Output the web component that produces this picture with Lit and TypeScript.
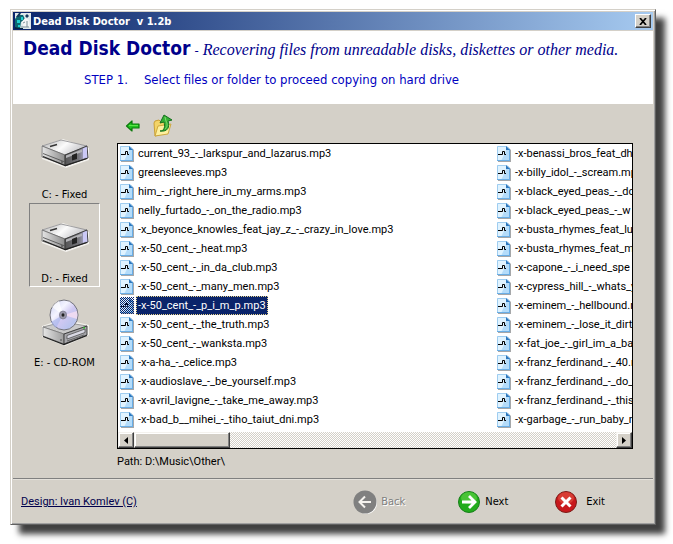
import { LitElement, html, css, svg } from "lit";
import { customElement, state } from "lit/decorators.js";
import { classMap } from "lit/directives/class-map.js";

const FIRST_COLUMN = [
  "current_93_-_larkspur_and_lazarus.mp3",
  "greensleeves.mp3",
  "him_-_right_here_in_my_arms.mp3",
  "nelly_furtado_-_on_the_radio.mp3",
  "-x_beyonce_knowles_feat_jay_z_-_crazy_in_love.mp3",
  "-x-50_cent_-_heat.mp3",
  "-x-50_cent_-_in_da_club.mp3",
  "-x-50_cent_-_many_men.mp3",
  "-x-50_cent_-_p_i_m_p.mp3",
  "-x-50_cent_-_the_truth.mp3",
  "-x-50_cent_-_wanksta.mp3",
  "-x-a-ha_-_celice.mp3",
  "-x-audioslave_-_be_yourself.mp3",
  "-x-avril_lavigne_-_take_me_away.mp3",
  "-x-bad_b__mihei_-_tiho_taiut_dni.mp3",
];

const SECOND_COLUMN = [
  "-x-benassi_bros_feat_dha",
  "-x-billy_idol_-_scream.mp3",
  "-x-black_eyed_peas_-_do",
  "-x-black_eyed_peas_-_w",
  "-x-busta_rhymes_feat_lun",
  "-x-busta_rhymes_feat_ma",
  "-x-capone_-_i_need_spe",
  "-x-cypress_hill_-_whats_y",
  "-x-eminem_-_hellbound.m",
  "-x-eminem_-_lose_it_dirty",
  "-x-fat_joe_-_girl_im_a_ba",
  "-x-franz_ferdinand_-_40.m",
  "-x-franz_ferdinand_-_do_",
  "-x-franz_ferdinand_-_this_",
  "-x-garbage_-_run_baby_r",
];

const DRIVES = [
  { id: "C", label: "C: - Fixed", kind: "disk" },
  { id: "D", label: "D: - Fixed", kind: "disk" },
  { id: "E", label: "E: - CD-ROM", kind: "cd" },
];

const diskIcon = html`<svg class="drive-icon" viewBox="0 0 48 48" aria-hidden="true">
  <defs>
    <linearGradient id="top" x1="0" y1="0" x2="1" y2="0.4">
      <stop offset="0" stop-color="#b4b4b4" /><stop offset="0.55" stop-color="#fbfbfb" /><stop offset="1" stop-color="#c4c4c8" />
    </linearGradient>
    <linearGradient id="side" x1="0" y1="0" x2="1" y2="0">
      <stop offset="0" stop-color="#e4e4e4" /><stop offset="1" stop-color="#8c8c8c" />
    </linearGradient>
    <linearGradient id="end" x1="0" y1="0" x2="1" y2="0">
      <stop offset="0" stop-color="#555" /><stop offset="0.6" stop-color="#77777d" /><stop offset="1" stop-color="#c6c4f4" />
    </linearGradient>
  </defs>
  <path d="M0 15 L1 28 L25 37 L48 29 L48 17 L22 8 Z" fill="#f4f2ee" />
  <path d="M1 15 L20 9 L46 15 L24 24 Z" fill="url(#top)" stroke="#8a8a8e" stroke-width="0.8" />
  <path d="M1 15 L24 24 L24 34 L1 26 Z" fill="url(#side)" stroke="#666" stroke-width="0.8" />
  <path d="M24 24 L46 15 L47 27 L24 35 Z" fill="url(#end)" stroke="#333" stroke-width="0.9" />
  <path d="M42 17.500 L46 16 L46 26 L42 27.500 Z" fill="#cbc9f6" />
  <path d="M25 24.500 L41 18.500 L41 21 L25 27 Z" fill="#b4b4b8" />
  <path d="M31 24 L36 22 L36 28 L31 29.500 Z" fill="#222" />
  <path d="M2 22.500 L24 31" stroke="#555" stroke-width="0.9" fill="none" />
  <path d="M2 25.500 L24 34.500 L46 27.500" stroke="#222" stroke-width="1.200" fill="none" />
  <path d="M9 15.500 L16 13.500" stroke="#333" stroke-width="1.400" />
  <circle cx="21" cy="31" r="1" fill="#5a5a5a" />
</svg>`;

const cdIcon = html`<svg class="drive-icon" viewBox="0 2 48 48" aria-hidden="true">
  <defs>
    <linearGradient id="cdside" x1="0" y1="0" x2="1" y2="0">
      <stop offset="0" stop-color="#e6e6e6" /><stop offset="1" stop-color="#9c9c9c" />
    </linearGradient>
    <linearGradient id="disc" x1="0" y1="0" x2="1" y2="1">
      <stop offset="0" stop-color="#c9cdf2" /><stop offset="0.35" stop-color="#f4f4ff" />
      <stop offset="0.55" stop-color="#cfc8f2" /><stop offset="0.8" stop-color="#b9c4ee" /><stop offset="1" stop-color="#eef" />
    </linearGradient>
  </defs>
  <path d="M1 29 L22 22 L48 28 L48 38 L24 49 L1 40 Z" fill="#f4f2ee" />
  <path d="M2 30 L22 25 L46 29 L23 37 Z" fill="#cacaca" stroke="#888" stroke-width="0.8" />
  <path d="M2 30 L23 37 L23 47 L2 39 Z" fill="url(#cdside)" stroke="#777" stroke-width="0.8" />
  <path d="M23 37 L46 29 L46 38 L23 47 Z" fill="#a6a6aa" stroke="#333" stroke-width="0.9" />
  <path d="M26 38.500 L44 32 L44 35.500 L26 42 Z" fill="#d9d9e4" stroke="#444" stroke-width="0.700" />
  <path d="M26 44 L43 38" stroke="#555" stroke-width="0.800" />
  <rect x="42" y="30" width="2" height="1.500" fill="#2cae2c" />
  <path d="M2 39.500 L23 47.500 L46 38.500" stroke="#222" stroke-width="1.200" fill="none" />
  <circle cx="20" cy="43" r="0.800" fill="#444" />
  <ellipse cx="23" cy="18" rx="14" ry="15" fill="url(#disc)" stroke="#73737b" stroke-width="1" />
  <path d="M22 18 L11 10 A14 15 0 0 1 18 4 Z" fill="#fff" opacity="0.700" />
  <path d="M23 18 L36 14 A14 15 0 0 1 36 22 Z" fill="#f7dff2" opacity="0.800" />
  <path d="M22 18 L15 31 A14 15 0 0 1 10 25 Z" fill="#a9b6ec" opacity="0.700" />
  <ellipse cx="22" cy="18" rx="3.600" ry="4" fill="#9b98ab" stroke="#77778a" stroke-width="0.700" />
  <ellipse cx="22" cy="18" rx="1.500" ry="1.700" fill="#222" />
</svg>`;

const fileIcon = html`<svg class="file-icon" viewBox="0 0 16 17" aria-hidden="true">
  <path d="M2 2 H12 L15 5 V17 H2 Z" fill="#8f9193" opacity="0.800" />
  <path d="M1 1 H11 L14 4 V16 H1 Z" fill="#b4dcfa" />
  <path d="M1 1 H10 V6 L5 16 H1 Z" fill="#e0f3ff" />
  <path d="M1 16 V15 H13 V4 H14 V16 Z" fill="#6aaee6" />
  <path d="M1.500 15 V1.500 H10" stroke="#9fcdf0" stroke-width="1" fill="none" />
  <path d="M10 1 L14 5 H10 Z" fill="#2f78bd" />
  <path d="M2 9.500 H6.500 V6.500 H8.500 V9.500 H10" stroke="#000" stroke-width="1" fill="none" />
</svg>`;

const round = (fill: string, light: string, rim: string, glyph: unknown) => svg`
  <circle cx="12" cy="12" r="10.5" fill=${fill} stroke=${rim} stroke-width="1" />
  <ellipse cx="12" cy="8" rx="8" ry="6" fill=${light} opacity="0.5" />
  ${glyph}`;

@customElement("app-root")
export class AppRoot extends LitElement {
  @state() private drive = "D";
  @state() private selected = "-x-50_cent_-_p_i_m_p.mp3";

  static styles = css`
    :host {
      display: block;
      box-sizing: border-box;
      padding: 9px 17px 20px 10px;
      background: #fff;
      color: #000;
      font: 11px/13px "DejaVu Sans Condensed", "DejaVu Sans", sans-serif;
    }
    * { box-sizing: border-box; }
    button { font: inherit; color: inherit; background: none; border: 0; padding: 0; margin: 0; }
    svg { display: block; flex: none; }
    .window {
      border: 1px solid;
      border-color: #d4d0c8 #606060 #606060 #d4d0c8;
      background: #d4d0c8;
      box-shadow: inset 1px 1px 0 #fff, inset -1px -1px 0 #a0a0a0, 9px 9px 6px #404040;
      padding: 2px;
    }
    .titlebar {
      display: flex;
      align-items: center;
      gap: 2px;
      height: 18px;
      margin-bottom: 1px;
      padding: 0 2px;
      background: linear-gradient(to right, #0a246a, #a6caf0);
      color: #fff;
      font-weight: bold;
      white-space: pre;
    }
    .app-icon { width: 16px; height: 16px; }
    .name { flex: 1; }
    .close {
      display: grid;
      place-items: center;
      width: 16px;
      height: 14px;
      background: #d4d0c8;
      border: 1px solid;
      border-color: #fff #404040 #404040 #fff;
      box-shadow: inset -1px -1px 0 #808080;
    }
    .close svg { width: 8px; height: 7px; }
    .header { background: #fff; color: #00008b; height: 73px; padding: 5px 10px; }
    .headline { display: flex; align-items: baseline; gap: 4px; margin: 0; font-weight: normal; line-height: 24px; white-space: nowrap; }
    .product { font: bold 19px/24px "DejaVu Sans Condensed", sans-serif; }
    .dash { font-size: 13px; }
    .tagline { font: italic 16px/24px "Liberation Serif", serif; }
    .step { display: flex; gap: 16px; margin: 8px 0 0 61px; font-size: 13px; line-height: 18px; color: #0000c0; white-space: nowrap; }
    .body { display: flex; padding: 9px 20px 9px 16px; }
    .drives { display: flex; flex-direction: column; width: 71px; margin: 6px 17px 0 0; flex: none; }
    .drive {
      display: flex;
      flex-direction: column;
      align-items: center;
      gap: 9px;
      height: 84px;
      padding: 11px 0 0;
      border: 1px solid transparent;
      white-space: nowrap;
    }
    .drive.current { border-color: #808080 #fff #fff #808080; }
    .drive-icon { width: 48px; height: 48px; }
    .files { flex: 1; min-width: 0; }
    .tools { display: flex; align-items: center; gap: 12px; height: 30px; padding: 0 0 4px 8px; }
    .tool-back { width: 16px; height: 16px; }
    .tool-up { width: 22px; height: 24px; }
    .listbox { border: 1px solid #000; background: #fff; }
    .columns { display: flex; height: 288px; overflow: hidden; }
    .column { list-style: none; margin: 0; padding: 0 0 0 1px; width: 377px; flex: none; }
    .file { display: flex; align-items: center; gap: 1px; height: 19px; font: 11px/17px Roboto, Arial, sans-serif; white-space: nowrap; }
    .file-icon { width: 16px; height: 17px; }
    .filename { border: 1px solid transparent; padding: 0 1px; height: 19px; }
    .selected .filename { background: #0a246a; color: #fff; border: 1px dotted #e8d48a; }
    .icon-wrap { position: relative; }
    .selected .icon-wrap::after {
      content: "";
      position: absolute;
      inset: 0 1px 0 1px;
      background: repeating-conic-gradient(#0a246a 0 25%, transparent 0 50%) 0 0 / 2px 2px;
    }
    .scrollbar { display: flex; height: 16px; background: repeating-conic-gradient(#d4d0c8 0 25%, #fff 0 50%) 0 0 / 2px 2px; }
    .arrow, .thumb {
      height: 16px;
      background: #d4d0c8;
      border: 1px solid;
      border-color: #f4f2ee #404040 #404040 #f4f2ee;
      box-shadow: inset -1px -1px 0 #808080, inset 1px 1px 0 #fff;
    }
    .arrow { display: grid; place-items: center; width: 16px; }
    .arrow svg { width: 4px; height: 7px; }
    .thumb { width: 96px; margin-right: auto; }
    .path { margin: 6px 0 0; font: 11px/14px Roboto, Arial, sans-serif; }
    .footer {
      display: flex;
      align-items: center;
      border-top: 1px solid #808080;
      box-shadow: inset 0 1px 0 #e4e1db;
      height: 44px;
      padding: 3px 48px 0 8px;
      line-height: 14px;
    }
    .credit { color: #00004c; font: 11px/14px Roboto, Arial, sans-serif; margin-right: auto; }
    .nav { display: flex; gap: 46px; }
    .nav button { display: flex; align-items: center; gap: 4px; }
    .nav svg { width: 24px; height: 24px; }
    .nav .back { color: #808080; text-shadow: 1px 1px 0 #fff; margin-right: 6px; }
    .nav .exit { gap: 8px; }
  `;

  private renderColumn(names: string[]) {
    return html`<ul class="column" role="listbox" aria-label="Files">
      ${names.map(
        (name) => html`<li
          class=${classMap({ file: true, selected: name === this.selected })}
          role="option"
          aria-selected=${name === this.selected ? "true" : "false"}
          @click=${() => (this.selected = name)}
        ><span class="icon-wrap">${fileIcon}</span><span class="filename">${name}</span></li>`
      )}
    </ul>`;
  }

  render() {
    return html`<main class="window">
      <div class="titlebar">
        <svg class="app-icon" viewBox="0 0 16 16" aria-hidden="true">
          <rect width="16" height="16" fill="#dfe8ea" />
          <path d="M0 16 V6 L3 2 H8 L10 6 L6 9 L5 16 Z" fill="#0e6870" />
          <path d="M1 4 L4 0 H6 L4 4 Z M10 3 L12 1 L14 3 L12 5 Z" fill="#14395c" />
          <path d="M2 7 H5 V10 H2 Z M6 4 H8 V7 H6 Z M3 12 H5 V14 H3 Z" fill="#1fd0cf" />
          <path d="M7 9 L10 5 L14 7 L15 14 L9 15 Z" fill="#f6f6f6" />
          <path d="M8 10 L10 9 M12 8 V14 M6 14 H14" stroke="#7c9098" fill="none" />
          <path d="M0 14 L4 15 H8 V16 H0 Z" fill="#07263f" />
        </svg>
        <span class="name">Dead Disk Doctor  v 1.2b</span>
        <button class="close" aria-label="Close">
          <svg viewBox="0 0 8 7" aria-hidden="true"><path d="M1 0 L7 7 M7 0 L1 7" stroke="#000" stroke-width="1.700" /></svg>
        </button>
      </div>
      <header class="header">
        <h1 class="headline">
          <span class="product">Dead Disk Doctor</span><span class="dash">-</span>
          <span class="tagline">Recovering files from unreadable disks, diskettes or other media.</span>
        </h1>
        <p class="step"><span>STEP 1.</span><span>Select files or folder to proceed copying on hard drive</span></p>
      </header>
      <div class="body">
        <nav class="drives" aria-label="Drives">
          ${DRIVES.map(
            (d) => html`<button class=${classMap({ drive: true, current: d.id === this.drive })} @click=${() => (this.drive = d.id)}>
              ${d.kind === "cd" ? cdIcon : diskIcon}<span>${d.label}</span>
            </button>`
          )}
        </nav>
        <section class="files">
          <div class="tools">
            <button aria-label="Back">
              <svg class="tool-back" viewBox="0 0 16 16"><path d="M1.500 8 L7 3 V6 H14 V10 H7 V13 Z" fill="#22c322" stroke="#0b7a0b" stroke-width="1.200" stroke-linejoin="round" /><path d="M4 7.500 H13" stroke="#5ce64a" /></svg>
            </button>
            <button aria-label="Up one level">
              <svg class="tool-up" viewBox="0 0 22 24">
                <path d="M1 9 L2 7 L6 6 L8 8 L14 7 V19 L2 22 Z" fill="#f3d468" stroke="#c69a2a" stroke-width="0.9" />
                <path d="M2 22 L5 12 L18 10 L15 20 Z" fill="#fdf0a0" stroke="#c9a136" stroke-width="0.900" />
                <path d="M7 17 C12 17 12 12 11 8 L7 9 L11 1 L19 6 L15 7 C17 13 15 18 7 17 Z" fill="#35b035" stroke="#14701c" stroke-width="1" stroke-linejoin="round" />
                <path d="M12 3 L13 7 C15 11 14 13 12 15" fill="none" stroke="#83dc70" stroke-width="1" />
              </svg>
            </button>
          </div>
          <div class="listbox">
            <div class="columns">${this.renderColumn(FIRST_COLUMN)}${this.renderColumn(SECOND_COLUMN)}</div>
            <div class="scrollbar">
              <button class="arrow" aria-label="Scroll left"><svg viewBox="0 0 4 7"><path d="M4 0 V7 L0 3.500 Z" /></svg></button>
              <div class="thumb"></div>
              <button class="arrow" aria-label="Scroll right"><svg viewBox="0 0 4 7"><path d="M0 0 V7 L4 3.500 Z" /></svg></button>
            </div>
          </div>
          <p class="path">Path: D:\\Music\\Other\\</p>
        </section>
      </div>
      <footer class="footer">
        <a class="credit" href="#credit">Design: Ivan Komlev (C)</a>
        <div class="nav">
          <button class="back" disabled>
            <svg viewBox="0 0 24 24" aria-hidden="true"><circle cx="13" cy="13" r="11" fill="#fff" /><circle cx="12" cy="12" r="11.500" fill="#808080" /><path d="M18 12 H7 M12 6.500 L6.500 12 L12 17.500" fill="none" stroke="#f4f2ee" stroke-width="2" /></svg>
            <span>Back</span>
          </button>
          <button>
            <svg viewBox="0 0 24 24" aria-hidden="true">${round("#22ac1c", "#6fdb50", "#17801a", svg`<path d="M5 12 H17 M12 6 L18 12 L12 18" fill="none" stroke="#fff" stroke-width="2.800" />`)}</svg>
            <span>Next</span>
          </button>
          <button class="exit">
            <svg viewBox="0 0 24 24" aria-hidden="true">${round("#c8181c", "#e8604c", "#7c1c18", svg`<path d="M7.500 7.500 L16.500 16.500 M16.500 7.500 L7.500 16.500" fill="none" stroke="#fff" stroke-width="3" />`)}</svg>
            <span>Exit</span>
          </button>
        </div>
      </footer>
    </main>`;
  }
}
